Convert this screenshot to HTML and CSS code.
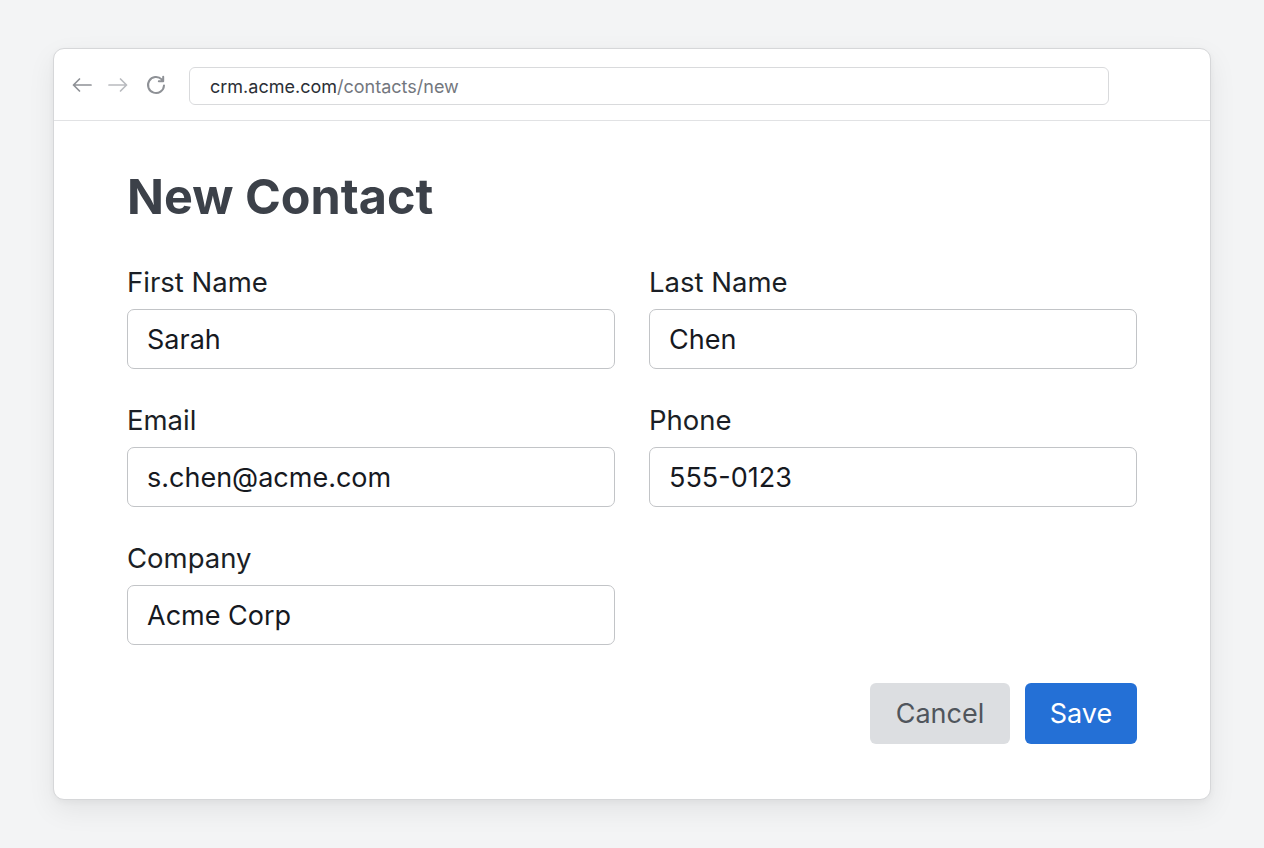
FILE: index.html
```html
<!DOCTYPE html>
<html lang="en">
<head>
<meta charset="utf-8">
<title>New Contact</title>
<link rel="stylesheet" href="styles.css">
</head>
<body>
<div class="window">
  <div class="toolbar">
    <div class="nav">
      <svg class="icon back" viewBox="0 0 24 24" width="24" height="24"><path d="M21 12H3.5M9.5 6l-6 6 6 6" fill="none" stroke="currentColor" stroke-width="1.7" stroke-linecap="round" stroke-linejoin="round"/></svg>
      <svg class="icon fwd" viewBox="0 0 24 24" width="24" height="24"><path d="M3 12h17.5M14.5 6l6 6-6 6" fill="none" stroke="currentColor" stroke-width="1.7" stroke-linecap="round" stroke-linejoin="round"/></svg>
      <svg class="icon reload" viewBox="0 0 24 24" width="24" height="24"><path d="M20 12.5a8 8 0 1 1-2.3-6.1M19.2 3.8v4.4h-4.4" fill="none" stroke="currentColor" stroke-width="2" stroke-linecap="round" stroke-linejoin="round"/></svg>
    </div>
    <div class="url"><span class="host">crm.acme.com</span><span class="path">/contacts/new</span></div>
  </div>
  <div class="content">
    <h1 class="title">New Contact</h1>
    <div class="grid">
      <div class="field">
        <label class="label">First Name</label>
        <div class="input">Sarah</div>
      </div>
      <div class="field">
        <label class="label">Last Name</label>
        <div class="input">Chen</div>
      </div>
      <div class="field">
        <label class="label">Email</label>
        <div class="input">s.chen@acme.com</div>
      </div>
      <div class="field">
        <label class="label">Phone</label>
        <div class="input">555-0123</div>
      </div>
      <div class="field">
        <label class="label">Company</label>
        <div class="input">Acme Corp</div>
      </div>
    </div>
    <div class="actions">
      <button class="btn cancel">Cancel</button>
      <button class="btn save">Save</button>
    </div>
  </div>
</div>
</body>
</html>
```
FILE: styles.css
```css
html, body {
  margin: 0;
  padding: 0;
}
body {
  background: #f3f4f5;
  font-family: Inter, "Noto Sans", sans-serif;
  padding: 48px 0 0 53px;
  height: 848px;
  box-sizing: border-box;
}
.window {
  width: 1158px;
  height: 752px;
  box-sizing: border-box;
  background: #fff;
  border: 1px solid #d6d7d9;
  border-radius: 11px;
  box-shadow: 0 10px 28px rgba(0,0,0,0.07), 0 2px 6px rgba(0,0,0,0.04);
  overflow: hidden;
}
.toolbar {
  height: 72px;
  box-sizing: border-box;
  border-bottom: 1px solid #e1e2e4;
  display: flex;
  align-items: center;
  padding-left: 16px;
}
.nav {
  display: flex;
  align-items: center;
  gap: 12px;
  width: 119px;
}
.icon { display: block; }
.back { color: #8e9196; }
.fwd { color: #b9bbbf; }
.reload { color: #8e9196; margin-left: 2px; }
.url {
  width: 920px;
  height: 38px;
  box-sizing: border-box;
  border: 1px solid #d9dadc;
  border-radius: 6px;
  display: flex;
  align-items: center;
  padding-left: 20px;
  font-size: 18px;
  margin-top: 3px;
}
.host { color: #2b2f36; }
.path { color: #73777e; }
.content {
  padding: 48px 73px 0 73px;
}
.title {
  margin: 0;
  font-size: 48.5px;
  font-weight: 700;
  color: #3c4149;
  line-height: 56px;
  letter-spacing: 0;
}
.grid {
  margin-top: 40px;
  display: grid;
  grid-template-columns: 488px 488px;
  column-gap: 34px;
  row-gap: 34px;
}
.field {
  display: flex;
  flex-direction: column;
}
.label {
  font-size: 27.5px;
  color: #1b1f26;
  line-height: 34px;
  height: 34px;
  margin-bottom: 10px;
}
.input {
  height: 60px;
  box-sizing: border-box;
  border: 1.5px solid #c2c4c7;
  border-radius: 7px;
  display: flex;
  align-items: center;
  padding-left: 19px;
  font-size: 27px;
  color: #16191f;
}
.actions {
  display: flex;
  justify-content: flex-end;
  gap: 15px;
  margin-top: 38px;
  width: 1010px;
}
.btn {
  height: 61px;
  border: none;
  border-radius: 6px;
  font-family: Inter, "Noto Sans", sans-serif;
  font-size: 27px;
  padding: 0;
}
.cancel {
  width: 140px;
  background: #dcdee1;
  color: #50555c;
}
.save {
  width: 112px;
  background: #2470d6;
  color: #fff;
}
```
